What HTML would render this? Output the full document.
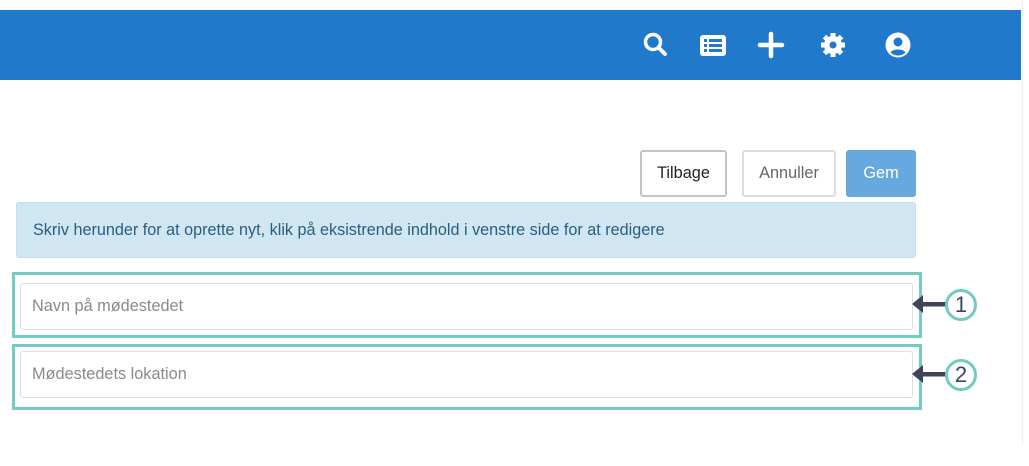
<!DOCTYPE html><html><head><style>
body{margin:0;width:1029px;height:466px;background:#fff;position:relative;font-family:"Liberation Sans",sans-serif;overflow:hidden}
.bar{position:absolute;left:0;top:10px;width:1021px;height:70px;background:#2079cb}
.edge{position:absolute;left:1022px;top:0;width:1px;height:445px;background:#eee}
.ic{position:absolute;top:31px}
.btn{position:absolute;top:150px;height:47px;box-sizing:border-box;border-radius:3px;font-size:16.3px;display:flex;align-items:center;justify-content:center}
.alert{position:absolute;left:16px;top:202px;width:900px;height:56px;box-sizing:border-box;background:#d0e7f3;border:1px solid #bfe0ee;border-radius:3px;color:#2c5d7b;font-size:16.2px;padding-left:16px;line-height:54px}
.box{position:absolute;left:12px;width:910px;height:66px;box-sizing:border-box;border:3px solid #74cbc2}
.inp{position:absolute;left:20px;width:893px;height:47px;box-sizing:border-box;border:1px solid #d9dfe8;border-radius:3px;color:#8a8a8a;font-size:16.3px;padding-left:11px;line-height:45px}
.num{position:absolute;left:945px;width:26px;height:26px;border:3px solid #74cbc2;border-radius:50%;text-align:center;line-height:26px;font-size:22px;color:#3e4556;background:#fff}
</style></head><body>
<div class="bar"></div><div class="edge"></div>
<svg class="ic" style="left:642px" width="28" height="28" viewBox="0 0 28 28"><circle cx="11" cy="11" r="7.5" fill="none" stroke="#fff" stroke-width="3.5"/><line x1="16.5" y1="16.5" x2="23" y2="23" stroke="#fff" stroke-width="4" stroke-linecap="round"/></svg>
<svg class="ic" style="left:699px" width="28" height="28" viewBox="0 0 28 28"><rect x="1" y="4" width="26" height="21" rx="3" fill="#fff"/><g fill="#2079cb"><rect x="5" y="8" width="3" height="3"/><rect x="5" y="13" width="3" height="3"/><rect x="5" y="18" width="3" height="3"/><rect x="10" y="8" width="13" height="3"/><rect x="10" y="13" width="13" height="3"/><rect x="10" y="18" width="13" height="3"/></g></svg>
<svg class="ic" style="left:757px" width="28" height="28" viewBox="0 0 28 28"><path d="M14 3v22M3 14h22" stroke="#fff" stroke-width="4.5" stroke-linecap="round"/></svg>
<svg class="ic" style="left:819px" width="28" height="28" viewBox="0 0 28 28"><g fill="#fff"><circle cx="14" cy="14" r="9"/><g stroke="#fff" stroke-width="5"><path d="M14 2v24M2 14h24M5.5 5.5l17 17M22.5 5.5l-17 17"/></g></g><circle cx="14" cy="14" r="3.5" fill="#2079cb"/></svg>
<svg class="ic" style="left:884px" width="28" height="28" viewBox="0 0 28 28"><circle cx="14" cy="14" r="12.5" fill="#fff"/><circle cx="14" cy="11" r="4.5" fill="#2079cb"/><path d="M6.5 21.5c2-4 13-4 15 0c-4 4-11 4-15 0z" fill="#2079cb"/></svg>
<div class="btn" style="left:640px;width:87px;border:2px solid #c4c4c4;color:#222">Tilbage</div>
<div class="btn" style="left:742px;width:94px;border:2px solid #dcdcdc;color:#666">Annuller</div>
<div class="btn" style="left:846px;width:70px;background:#67a8de;color:#fff">Gem</div>
<div class="alert">Skriv herunder for at oprette nyt, klik på eksistrende indhold i venstre side for at redigere</div>
<div class="box" style="top:272px"></div><div class="inp" style="top:283px">Navn på mødestedet</div>
<div class="box" style="top:344px"></div><div class="inp" style="top:351px">Mødestedets lokation</div>
<svg style="position:absolute;left:910px;top:292px" width="40" height="100" viewBox="0 0 40 100"><g fill="#3e4556"><path d="M2 12l11-9v18z"/><rect x="10" y="10" width="28" height="4.5"/><path d="M2 82l11-9v18z"/><rect x="10" y="80" width="28" height="4.5"/></g></svg>
<div class="num" style="top:289px">1</div>
<div class="num" style="top:359px">2</div>
</body></html>
